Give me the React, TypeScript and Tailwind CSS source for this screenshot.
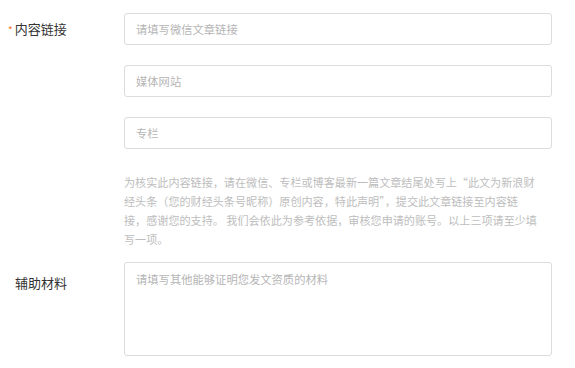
export default function App() {
  const font = "font-['Noto_Sans_CJK_SC','Liberation_Sans',sans-serif]";
  const field =
    "rounded-[3px] border border-[#dcdcdc] bg-white px-[11px] text-[11.3px] text-[#333] outline-none placeholder:text-[#b5b5b5] " +
    font;

  const help = [
    "为核实此内容链接，请在微信、专栏或博客最新一篇文章结尾处写上“此文为新浪财",
    "经头条（您的财经头条号昵称）原创内容，特此声明”，提交此文章链接至内容链",
    "接，感谢您的支持。 我们会依此为参考依据，审核您申请的账号。以上三项请至少填",
    "写一项。",
  ];

  return (
    <div className={`min-h-screen bg-white pt-[13px] pl-2 ${font}`}>
      <div className="flex items-start">
        <div className="mt-[6px] flex w-[116px] shrink-0 items-baseline text-[13px] leading-[20px] text-[#333]">
          <span className="mr-[2px] text-[10px] text-[#f5722c]">*</span>
          内容链接
        </div>
        <div className="flex w-[428px] shrink-0 flex-col">
          <div className="flex flex-col gap-5">
            <input className={`h-8 w-full ${field}`} placeholder="请填写微信文章链接" />
            <input className={`h-8 w-full ${field}`} placeholder="媒体网站" />
            <input className={`h-8 w-full ${field}`} placeholder="专栏" />
          </div>
          <p className="mt-[24px] text-[11.1px] leading-[19px] whitespace-nowrap text-[#bdbdbd]">
            {help.map((line) => (
              <span key={line} className="block">
                {line}
              </span>
            ))}
          </p>
        </div>
      </div>

      <div className="mt-[13px] flex items-start">
        <div className="mt-[11px] w-[116px] shrink-0 pl-[7px] text-[13px] leading-[20px] text-[#333]">
          辅助材料
        </div>
        <textarea
          className={`h-[94px] w-[428px] shrink-0 resize-none pt-[7px] leading-[18px] ${field}`}
          placeholder="请填写其他能够证明您发文资质的材料"
        />
      </div>
    </div>
  );
}
